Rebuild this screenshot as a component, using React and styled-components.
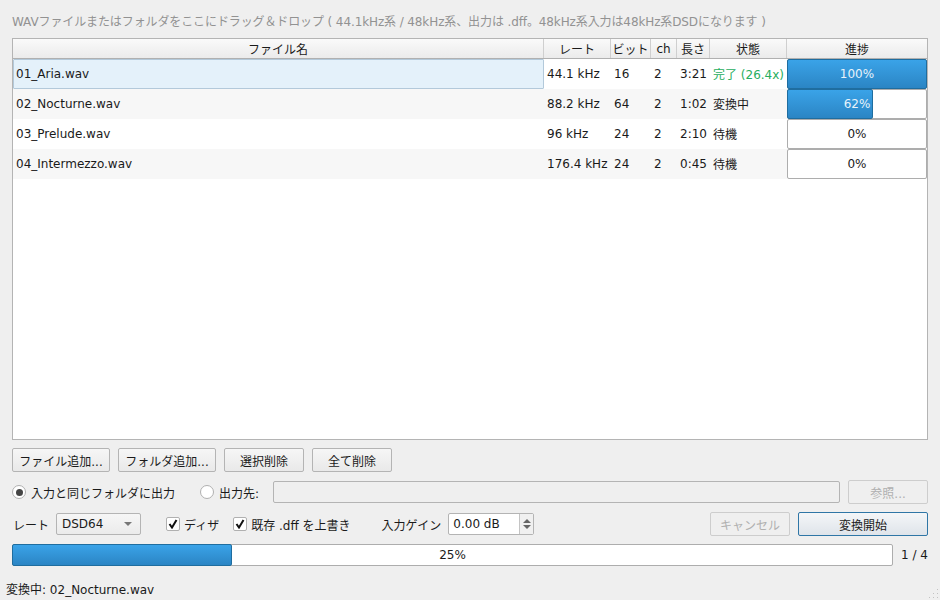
import React from 'react';
import styled, { createGlobalStyle, css } from 'styled-components';

const GlobalStyle = createGlobalStyle`
  html, body { margin: 0; padding: 0; }
  body {
    width: 940px;
    height: 600px;
    overflow: hidden;
    background: #efefef;
    color: #1a1a1a;
    font-family: "DejaVu Sans", "Noto Sans CJK JP", sans-serif;
    font-size: 12px;
  }
`;

const COLUMNS = '531px 67px 40px 26px 33px 77px 140px';

const files = [
  { name: '01_Aria.wav', rate: '44.1 kHz', bits: '16', len: '3:21', state: '完了 (26.4x)', done: true, pct: 100 },
  { name: '02_Nocturne.wav', rate: '88.2 kHz', bits: '64', len: '1:02', state: '変換中', pct: 62 },
  { name: '03_Prelude.wav', rate: '96 kHz', bits: '24', len: '2:10', state: '待機', pct: 0 },
  { name: '04_Intermezzo.wav', rate: '176.4 kHz', bits: '24', len: '0:45', state: '待機', pct: 0 },
];

const barFill = css`
  background: linear-gradient(#3aa3e8, #2b85c4);
  border: 1px solid #1f6d9f;
  border-radius: 2px;
  box-sizing: border-box;
`;

const Window = styled.div`
  width: 940px;
  height: 600px;
  box-sizing: border-box;
  padding: 14px 12px 0;
  display: flex;
  flex-direction: column;
`;

const Hint = styled.div`
  height: 16px;
  line-height: 16px;
  color: #929292;
  letter-spacing: -0.11px;
  white-space: nowrap;
  margin-bottom: 8px;
`;

const Table = styled.div`
  height: 402px;
  flex: none;
  box-sizing: border-box;
  border: 1px solid #b4b4b4;
  background: #fff;
  margin-bottom: 8px;
`;

const Header = styled.div`
  display: grid;
  grid-template-columns: ${COLUMNS};
  height: 20px;
  box-sizing: border-box;
  border-bottom: 1px solid #b0b0b0;
  background: linear-gradient(#fafafa, #ebebeb);
`;

const HeaderCell = styled.div`
  text-align: center;
  line-height: ${p => (p.$latin ? 20 : 23)}px;
  border-right: 1px solid #cfcfcf;
  white-space: nowrap;
  overflow: hidden;
  &:last-child { border-right: 0; }
`;

const Row = styled.div`
  display: grid;
  grid-template-columns: ${COLUMNS};
  height: 30px;
  background: ${p => (p.$alt ? '#f7f7f7' : '#fff')};
`;

const Cell = styled.div`
  line-height: 30px;
  padding-left: 3px;
  white-space: nowrap;
  overflow: hidden;
`;

const NameCell = styled(Cell)`
  ${p => p.$selected && css`
    background: #e4f1fa;
    border: 1px solid #b3c9da;
    border-radius: 1px;
    line-height: 28px;
    padding-left: 2px;
  `}
`;

const StateCell = styled(Cell)`
  line-height: 32px;
  color: ${p => (p.$done ? '#27ae60' : '#1a1a1a')};
`;

const ProgressCell = styled.div`
  display: flex;
  align-items: stretch;
`;

const RowBar = styled.div`
  position: relative;
  flex: 1;
  background: #fff;
  border: 1px solid #adadad;
  border-radius: 2px;
  text-align: center;
  line-height: 28px;
`;

const RowFill = styled.div`
  ${barFill}
  position: absolute;
  left: -1px;
  top: -1px;
  bottom: -1px;
`;

const RowLabel = styled.span`
  position: relative;
  color: ${p => (p.$light ? '#e8f3fb' : '#1a1a1a')};
`;

const Line = styled.div`
  display: flex;
  align-items: center;
  height: 24px;
  margin-bottom: 8px;
`;

const TotalLine = styled(Line)`
  height: 22px;
  margin-bottom: 10px;
`;

const Button = styled.button`
  width: ${p => p.$w}px;
  height: 24px;
  flex: none;
  padding: 0;
  margin-right: ${p => p.$mr || 0}px;
  font: inherit;
  color: ${p => (p.disabled ? '#b0b0b0' : '#1a1a1a')};
  background: ${p => (p.disabled ? '#efefef' : 'linear-gradient(#f6f6f6, #e9e9e9)')};
  border: 1px solid ${p => (p.disabled ? '#cdcdcd' : '#b4b4b4')};
  border-radius: 2px;
`;

const PrimaryButton = styled(Button)`
  border-color: #2f76a6;
  background: linear-gradient(#f4f6f8, #dfe4ea);
`;

const RadioLabel = styled.label`
  display: flex;
  align-items: center;
  white-space: nowrap;
  margin-right: ${p => p.$mr || 0}px;
`;

const RadioDot = styled.span`
  width: 14px;
  height: 14px;
  flex: none;
  box-sizing: border-box;
  margin-right: 5px;
  border: 1px solid #b0b0b0;
  border-radius: 50%;
  background: #fff;
  display: flex;
  align-items: center;
  justify-content: center;
  &::after {
    content: '';
    display: ${p => (p.$on ? 'block' : 'none')};
    width: 7px;
    height: 7px;
    border-radius: 50%;
    background: #444;
  }
`;

const PathInput = styled.div`
  width: 567px;
  height: 22px;
  flex: none;
  box-sizing: border-box;
  margin-right: 8px;
  background: #efefef;
  border: 1px solid #b4b4b4;
  border-radius: 2px;
`;

const Caption = styled.span`
  white-space: nowrap;
  margin-left: ${p => p.$ml || 0}px;
  margin-right: ${p => p.$mr || 0}px;
`;

const Combo = styled.div`
  width: 85px;
  height: 22px;
  flex: none;
  box-sizing: border-box;
  margin-right: 25px;
  padding: 0 5px;
  display: flex;
  align-items: center;
  justify-content: space-between;
  background: linear-gradient(#f6f6f6, #ebebeb);
  border: 1px solid #b4b4b4;
  border-radius: 2px;
  &::after {
    content: '';
    border-left: 4px solid transparent;
    border-right: 4px solid transparent;
    border-top: 4px solid #777;
    margin-right: 3px;
  }
`;

const CheckLabel = styled.label`
  display: flex;
  align-items: center;
  white-space: nowrap;
  margin-right: ${p => p.$mr}px;
`;

const CheckBox = styled.span`
  width: 14px;
  height: 14px;
  flex: none;
  box-sizing: border-box;
  margin-right: 4px;
  border: 1px solid #b0b0b0;
  border-radius: 2px;
  background: #fff;
  display: flex;
  align-items: center;
  justify-content: center;
`;

const Spin = styled.div`
  width: 86px;
  height: 22px;
  flex: none;
  box-sizing: border-box;
  display: flex;
  background: #fff;
  border: 1px solid #b4b4b4;
  border-radius: 2px;
  margin-right: auto;
`;

const SpinValue = styled.div`
  width: 71px;
  line-height: 20px;
  padding-left: 4px;
  box-sizing: border-box;
  border-right: 1px solid #c4c4c4;
`;

const SpinArrows = styled.div`
  flex: 1;
  display: flex;
  flex-direction: column;
  align-items: center;
  justify-content: center;
  gap: 2px;
  background: #f0f0f0;
`;

const Arrow = styled.span`
  border-left: 4px solid transparent;
  border-right: 4px solid transparent;
  ${p => (p.$up ? 'border-bottom: 4px solid #666;' : 'border-top: 4px solid #666;')}
`;

const TotalBar = styled.div`
  position: relative;
  width: 881px;
  height: 22px;
  flex: none;
  box-sizing: border-box;
  margin-right: 8px;
  background: #fff;
  border: 1px solid #adadad;
  border-radius: 2px;
  text-align: center;
  line-height: 20px;
`;

const TotalFill = styled.div`
  ${barFill}
  position: absolute;
  left: -1px;
  top: -1px;
  bottom: -1px;
`;

const TotalLabel = styled.span`
  position: relative;
`;

const Status = styled.div`
  position: relative;
  margin: 4px -12px 0;
  padding-left: 6px;
  height: 20px;
  line-height: 20px;
`;

const Grip = styled.svg`
  position: absolute;
  right: 1px;
  bottom: 1px;
`;

const CheckMark = () => (
  <svg width="10" height="10" viewBox="0 0 10 10">
    <path d="M1.5 5 L4 8.5 L8.5 1" fill="none" stroke="#111" strokeWidth="2" />
  </svg>
);

function App() {
  return (
    <Window>
      <GlobalStyle />
      <Hint>WAVファイルまたはフォルダをここにドラッグ＆ドロップ ( 44.1kHz系 / 48kHz系、出力は .dff。48kHz系入力は48kHz系DSDになります )</Hint>
      <Table>
        <Header>
          {['ファイル名', 'レート', 'ビット', 'ch', '長さ', '状態', '進捗'].map(h => (
            <HeaderCell key={h} $latin={h === 'ch'}>{h}</HeaderCell>
          ))}
        </Header>
        {files.map((f, i) => (
          <Row key={f.name} $alt={i % 2 === 1}>
            <NameCell $selected={i === 0}>{f.name}</NameCell>
            <Cell>{f.rate}</Cell>
            <Cell>{f.bits}</Cell>
            <Cell>2</Cell>
            <Cell>{f.len}</Cell>
            <StateCell $done={f.done}>{f.state}</StateCell>
            <ProgressCell>
              <RowBar>
                {f.pct > 0 && <RowFill style={{ width: `${Math.floor(f.pct * 1.4)}px` }} />}
                <RowLabel $light={f.pct > 50}>{f.pct}%</RowLabel>
              </RowBar>
            </ProgressCell>
          </Row>
        ))}
      </Table>
      <Line>
        <Button $w={98} $mr={8}>ファイル追加...</Button>
        <Button $w={98} $mr={8}>フォルダ追加...</Button>
        <Button $w={80} $mr={8}>選択削除</Button>
        <Button $w={80}>全て削除</Button>
      </Line>
      <Line>
        <RadioLabel $mr={25}><RadioDot $on />入力と同じフォルダに出力</RadioLabel>
        <RadioLabel $mr={14}><RadioDot />出力先:</RadioLabel>
        <PathInput />
        <Button $w={80} disabled>参照...</Button>
      </Line>
      <Line>
        <Caption $ml={1} $mr={7}>レート</Caption>
        <Combo>DSD64</Combo>
        <CheckLabel $mr={14}>
          <CheckBox><CheckMark /></CheckBox>
          ディザ
        </CheckLabel>
        <CheckLabel $mr={31}>
          <CheckBox><CheckMark /></CheckBox>
          既存 .dff を上書き
        </CheckLabel>
        <Caption $mr={7}>入力ゲイン</Caption>
        <Spin>
          <SpinValue>0.00 dB</SpinValue>
          <SpinArrows><Arrow $up /><Arrow /></SpinArrows>
        </Spin>
        <Button $w={80} $mr={8} disabled>キャンセル</Button>
        <PrimaryButton $w={130}>変換開始</PrimaryButton>
      </Line>
      <TotalLine>
        <TotalBar>
          <TotalFill style={{ width: '220px' }} />
          <TotalLabel>25%</TotalLabel>
        </TotalBar>
        <Caption>1 / 4</Caption>
      </TotalLine>
      <Status>
        変換中: 02_Nocturne.wav
        <Grip width="12" height="12" viewBox="0 0 12 12">
          {[[10, 2], [10, 6], [6, 6], [10, 10], [6, 10], [2, 10]].map(([x, y]) => (
            <rect key={`${x}-${y}`} x={x} y={y} width="1" height="1" fill="#c2c2c2" />
          ))}
        </Grip>
      </Status>
    </Window>
  );
}

export default App;
